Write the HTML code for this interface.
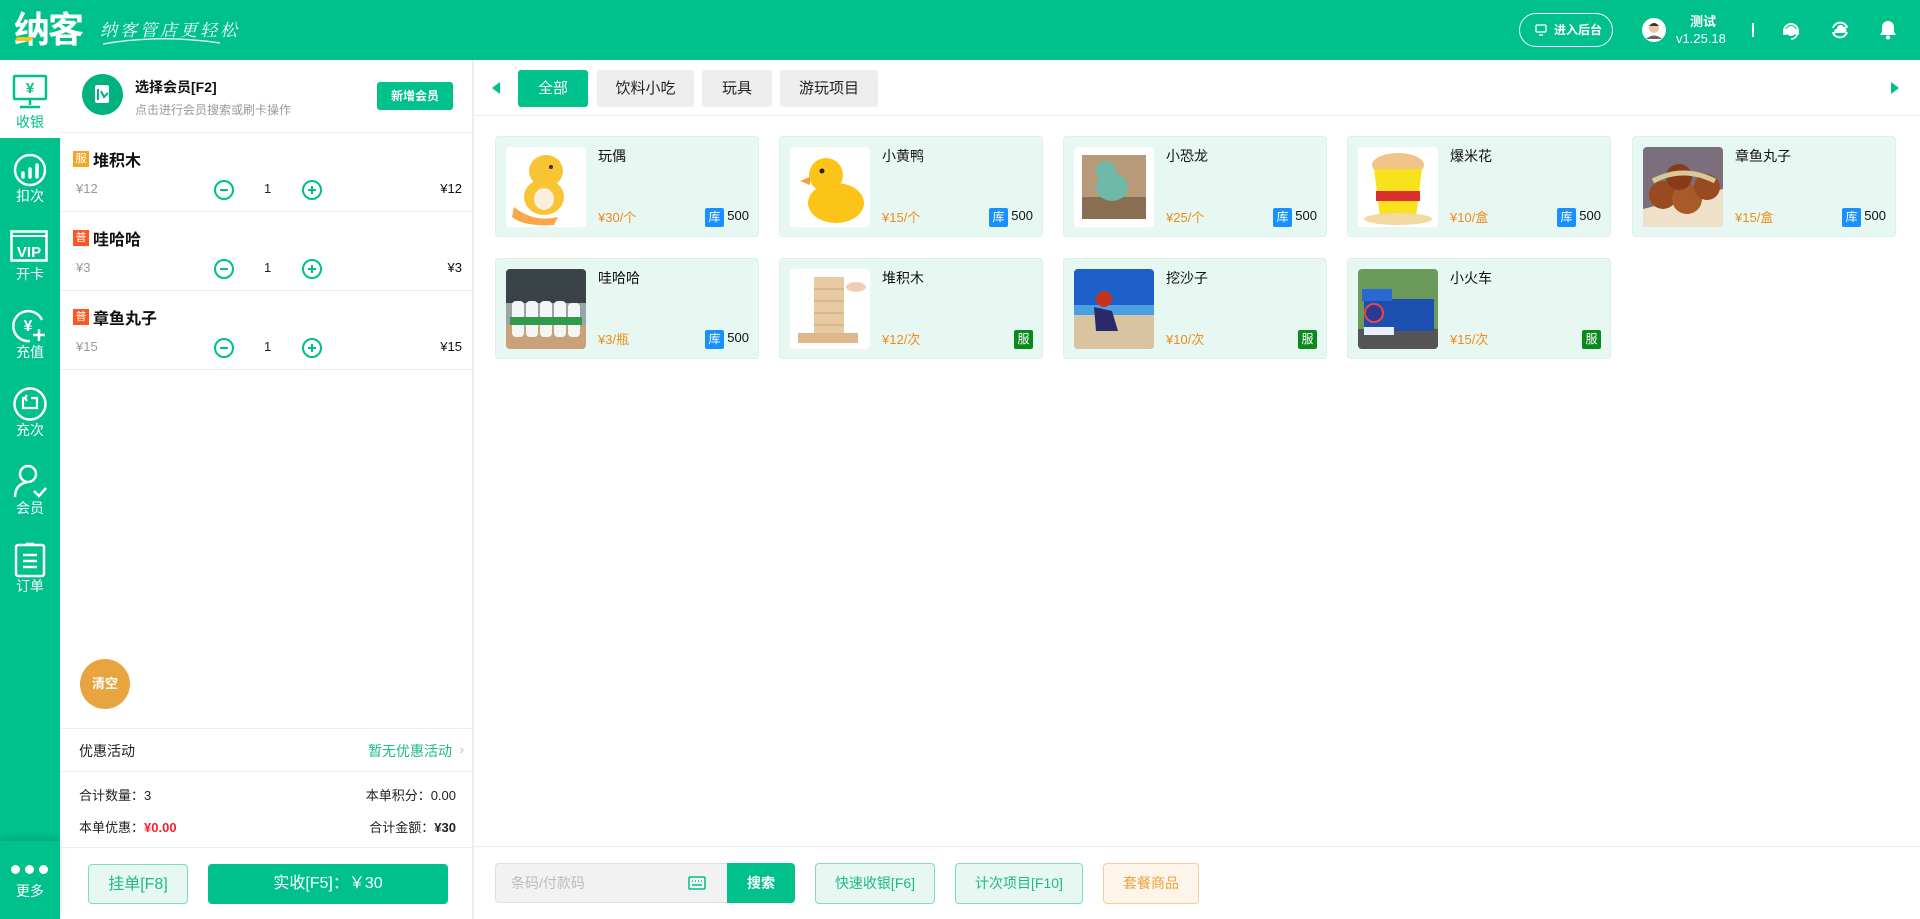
<!DOCTYPE html>
<html><head><meta charset="utf-8"><style>
*{margin:0;padding:0;box-sizing:border-box}
body{width:1920px;height:919px;overflow:hidden;background:#fff;font-family:"Liberation Sans","Noto Sans CJK SC",sans-serif;color:#222;position:relative}
.abs{position:absolute}
.hdr{left:0;top:0;width:1920px;height:60px;background:#00c08b}
.side{left:0;top:60px;width:60px;height:859px;background:#00c08b}
.si{position:absolute;left:0;width:60px;height:78px;color:#fff;font-size:14px;text-align:center}
.si svg{position:absolute;left:12px;top:14px}
.si span{position:absolute;left:0;right:0;top:48px}
.panel{left:60px;top:60px;width:414px;height:859px;border-right:2px solid #eee}
.item{position:absolute;left:0;width:412px;height:79px;border-bottom:1px solid #eee}
.tag{position:absolute;left:13px;top:18px;width:16px;height:16px;color:#fff;font-size:11px;line-height:16px;text-align:center}
.nm{position:absolute;left:33px;top:14px;font-size:16px;font-weight:bold;color:#111}
.pl{position:absolute;left:16px;top:48px;font-size:13px;color:#999}
.pr{position:absolute;right:10px;top:48px;font-size:13px;color:#111}
.qty{position:absolute;left:204px;top:48px;font-size:13px}
.cb{position:absolute;top:47px;width:20px;height:20px;border:2px solid #00c08b;border-radius:50%}
.cb:before{content:"";position:absolute;left:4px;top:7px;width:8px;height:2px;background:#00c08b}
.cb.p:after{content:"";position:absolute;left:7px;top:4px;width:2px;height:8px;background:#00c08b}
.tab{position:absolute;top:70px;height:37px;border-radius:3px;background:#eee;font-size:15px;line-height:37px;text-align:center;color:#222}
.card{position:absolute;width:264px;height:101px;background:#e6f8f1;border:1px solid #dcefe8;border-radius:4px}
.card .im{position:absolute;left:10px;top:10px;width:80px;height:80px;border-radius:4px;background:#fff;overflow:hidden}
.card .t{position:absolute;left:102px;top:9px;font-size:14px;color:#111}
.card .p{position:absolute;left:102px;top:70px;font-size:13px;color:#f08a1c}
.card .k{position:absolute;right:34px;top:71px;width:19px;height:19px;background:#1890ff;color:#fff;font-size:12px;line-height:19px;text-align:center;border-radius:2px}
.card .n{position:absolute;right:9px;top:71px;font-size:13px;color:#111}
.card .f{position:absolute;right:9px;top:71px;width:19px;height:19px;background:#0a8a1c;color:#fff;font-size:12px;line-height:19px;text-align:center;border-radius:2px}
.bb{position:absolute;top:863px;height:41px;border-radius:4px;font-size:14px;line-height:39px;text-align:center}
</style></head><body>
<div class="abs hdr"></div>
<div class="abs" style="left:14px;top:8px;font-size:36px;font-weight:bold;color:#fff;letter-spacing:-2px;line-height:44px">纳客</div>
<div class="abs" style="left:16px;top:37px;width:16px;height:4px;background:#f5c518;transform:skewX(-30deg)"></div>
<div class="abs" style="left:100px;top:16px;font-size:17px;color:#fff;font-style:italic;letter-spacing:3px;font-family:'Liberation Serif','Noto Serif CJK SC',serif">纳客管店更轻松</div>
<svg class="abs" style="left:100px;top:36px" width="125" height="10"><path d="M3 8 Q60 -2 120 7" stroke="#fff" stroke-width="1.5" fill="none" opacity=".8"/></svg>
<div class="abs" style="left:1519px;top:13px;width:94px;height:34px;border:1px solid #fff;border-radius:17px;color:#fff;font-size:12px;font-weight:bold;line-height:32px;padding-left:34px">进入后台</div>
<svg class="abs" style="left:1535px;top:24px" width="12" height="12"><rect x="1" y="1" width="10" height="7" rx="1" fill="none" stroke="#fff" stroke-width="1.3"/><path d="M4 11h4" stroke="#fff" stroke-width="1.3"/></svg>
<svg class="abs" style="left:1642px;top:18px" width="24" height="24"><circle cx="12" cy="12" r="12" fill="#fff"/><circle cx="12" cy="10" r="5" fill="#f2c4a0"/><path d="M7 8q5-6 10 0" fill="#333"/><path d="M4 21q8-7 16 0" fill="#666"/></svg>
<div class="abs" style="left:1686px;top:11px;width:34px;text-align:center;color:#fff;font-size:13px;font-weight:bold">测试</div>
<div class="abs" style="left:1676px;top:31px;color:#fff;font-size:13px">v1.25.18</div>
<div class="abs" style="left:1752px;top:23px;width:2px;height:14px;background:#fff"></div>
<svg class="abs" style="left:1781px;top:20px" width="20" height="20"><path d="M3 11a7 7 0 0 1 14 0" fill="none" stroke="#fff" stroke-width="2"/><rect x="2" y="9" width="4" height="6" rx="1.5" fill="#fff"/><rect x="14" y="9" width="4" height="6" rx="1.5" fill="#fff"/><circle cx="10" cy="11" r="5" fill="#fff"/><path d="M16 15q-2 4-6 4" stroke="#fff" fill="none" stroke-width="1.5"/></svg>
<svg class="abs" style="left:1830px;top:20px" width="20" height="20"><path d="M3 8a7.5 7.5 0 0 1 14-1M17 12a7.5 7.5 0 0 1-14 1" fill="none" stroke="#fff" stroke-width="2"/><path d="M15 4l2 3-3 1M5 16l-2-3 3-1" fill="none" stroke="#fff" stroke-width="1.5"/><path d="M6 13h8a2.5 2.5 0 0 0 0-5 3.5 3.5 0 0 0-7 1 2 2 0 0 0-1 4z" fill="#fff"/></svg>
<svg class="abs" style="left:1879px;top:19px" width="18" height="22"><path d="M9 2a6 6 0 0 0-6 6v5l-2 3h16l-2-3V8a6 6 0 0 0-6-6z" fill="#fff"/><circle cx="9" cy="18.5" r="2" fill="#fff"/></svg>

<div class="abs side"></div>
<div class="si" style="top:60px;background:#fff;color:#00c08b">
<svg width="36" height="36" viewBox="0 0 36 36" style="top:14px"><rect x="2" y="2" width="32" height="23" rx="1" fill="none" stroke="#00c08b" stroke-width="2.5"/><text x="18" y="19" font-size="15" font-weight="bold" fill="#00c08b" text-anchor="middle" font-family="Liberation Sans">¥</text><path d="M18 25v6M8 33h20" stroke="#00c08b" stroke-width="2.5"/></svg><span style="top:52px">收银</span></div>
<div class="si" style="top:138px"><svg width="36" height="36"><circle cx="18" cy="18" r="15" fill="none" stroke="#fff" stroke-width="2.5"/><path d="M11 25v-4M18 25v-8M25 25v-12" stroke="#fff" stroke-width="3.5" stroke-linecap="round"/></svg><span>扣次</span></div>
<div class="si" style="top:216px"><svg width="38" height="36" style="left:10px"><rect x="1.5" y="1.5" width="35" height="29" fill="none" stroke="#fff" stroke-width="2.5"/><path d="M1.5 6h35" stroke="#fff" stroke-width="2"/><text x="19" y="27" font-size="15" font-weight="bold" fill="#fff" text-anchor="middle" font-family="Liberation Sans">VIP</text></svg><span>开卡</span></div>
<div class="si" style="top:294px"><svg width="36" height="36"><path d="M30 12A15 15 0 1 0 18 33" fill="none" stroke="#fff" stroke-width="2.5"/><text x="16" y="23" font-size="16" font-weight="bold" fill="#fff" text-anchor="middle" font-family="Liberation Sans">¥</text><path d="M27 21v12M21 27h12" stroke="#fff" stroke-width="2.5"/></svg><span>充值</span></div>
<div class="si" style="top:372px"><svg width="36" height="36"><circle cx="18" cy="18" r="15.5" fill="none" stroke="#fff" stroke-width="2.5"/><path d="M13 12h-2v10h14V12h-6M15 9l-2 3 2 3" fill="none" stroke="#fff" stroke-width="2.2"/></svg><span>充次</span></div>
<div class="si" style="top:450px"><svg width="36" height="36"><circle cx="16" cy="10" r="8" fill="none" stroke="#fff" stroke-width="2.5"/><path d="M3 33q0-13 13-15M22 27l5 5 7-8" fill="none" stroke="#fff" stroke-width="2.5"/></svg><span>会员</span></div>
<div class="si" style="top:528px"><svg width="36" height="36"><rect x="4" y="3" width="28" height="31" rx="2" fill="none" stroke="#fff" stroke-width="2.5"/><path d="M14 2h8M11 13h14M11 19h14M11 25h14" stroke="#fff" stroke-width="2.5"/></svg><span>订单</span></div>
<div class="abs" style="left:0;top:841px;width:60px;height:78px;background:#00c08b;box-shadow:0 -3px 6px rgba(0,0,0,.12)"></div>
<div class="abs" style="left:11px;top:865px;width:9px;height:9px;border-radius:50%;background:#fff;box-shadow:14px 0 #fff,28px 0 #fff"></div>
<div class="abs" style="left:0;top:881px;width:60px;text-align:center;color:#fff;font-size:14px">更多</div>

<div class="abs panel">
 <div class="abs" style="left:22px;top:14px;width:41px;height:41px;border-radius:50%;background:#00b27f"></div>
 <svg class="abs" style="left:32px;top:23px" width="22" height="24"><rect x="3" y="2" width="14" height="18" rx="2" fill="#fff"/><path d="M6 6v11M9 8l3 6 4-4" stroke="#00b27f" stroke-width="2" fill="none"/></svg>
 <div class="abs" style="left:75px;top:17px;font-size:14px;font-weight:bold;color:#111">选择会员[F2]</div>
 <div class="abs" style="left:75px;top:41px;font-size:12px;color:#999">点击进行会员搜索或刷卡操作</div>
 <div class="abs" style="left:317px;top:22px;width:76px;height:28px;background:#00c08b;border-radius:3px;color:#fff;font-size:12px;font-weight:bold;text-align:center;line-height:28px">新增会员</div>
 <div class="abs" style="left:0;top:72px;width:412px;height:1px;background:#eee"></div>
 <div class="item" style="top:73px"><div class="tag" style="background:#f5a623">服</div><div class="nm">堆积木</div><div class="pl">¥12</div><div class="cb" style="left:154px"></div><div class="qty">1</div><div class="cb p" style="left:242px"></div><div class="pr">¥12</div></div>
 <div class="item" style="top:152px"><div class="tag" style="background:#ff5722">普</div><div class="nm">哇哈哈</div><div class="pl">¥3</div><div class="cb" style="left:154px"></div><div class="qty">1</div><div class="cb p" style="left:242px"></div><div class="pr">¥3</div></div>
 <div class="item" style="top:231px"><div class="tag" style="background:#ff5722">普</div><div class="nm">章鱼丸子</div><div class="pl">¥15</div><div class="cb" style="left:154px"></div><div class="qty">1</div><div class="cb p" style="left:242px"></div><div class="pr">¥15</div></div>
 <div class="abs" style="left:20px;top:599px;width:50px;height:50px;border-radius:50%;background:#e8a43e;color:#fff;font-size:13px;font-weight:bold;text-align:center;line-height:50px">清空</div>
 <div class="abs" style="left:0;top:668px;width:412px;height:1px;background:#eee"></div>
 <div class="abs" style="left:19px;top:681px;font-size:14px;color:#222">优惠活动</div>
 <div class="abs" style="right:20px;top:681px;font-size:14px;color:#1fb88a">暂无优惠活动</div>
 <div class="abs" style="right:8px;top:681px;font-size:14px;color:#bbb">›</div>
 <div class="abs" style="left:0;top:711px;width:412px;height:1px;background:#eee"></div>
 <div class="abs" style="left:19px;top:725px;font-size:13px">合计数量：3</div>
 <div class="abs" style="right:16px;top:725px;font-size:13px">本单积分：0.00</div>
 <div class="abs" style="left:19px;top:757px;font-size:13px">本单优惠：<b style="color:#f5222d">¥0.00</b></div>
 <div class="abs" style="right:16px;top:757px;font-size:13px">合计金额：<b>¥30</b></div>
 <div class="abs" style="left:0;top:787px;width:412px;height:1px;background:#eee"></div>
 <div class="bb" style="left:28px;top:804px;width:100px;height:40px;background:#e6f8f1;border:1px solid #7fdcbf;color:#1fb88a;font-size:16px">挂单[F8]</div>
 <div class="bb" style="left:148px;top:804px;width:240px;height:40px;background:#00c08b;color:#fff;font-size:16px;line-height:40px">实收[F5]：￥30</div>
</div>

<svg class="abs" style="left:491px;top:81px" width="10" height="14"><path d="M9 1v12L1 7z" fill="#00c08b"/></svg>
<svg class="abs" style="left:1890px;top:81px" width="10" height="14"><path d="M1 1v12l8-6z" fill="#00c08b"/></svg>
<div class="tab" style="left:518px;width:70px;background:#00c08b;color:#fff">全部</div>
<div class="tab" style="left:597px;width:97px">饮料小吃</div>
<div class="tab" style="left:702px;width:70px">玩具</div>
<div class="tab" style="left:780px;width:98px">游玩项目</div>
<div class="abs" style="left:474px;top:115px;width:1446px;height:1px;background:#eee"></div>

<div class="card" style="left:495px;top:136px"><div class="im"><svg width="80" height="80"><ellipse cx="40" cy="24" rx="17" ry="16" fill="#f7c434"/><ellipse cx="38" cy="50" rx="20" ry="18" fill="#f7c434"/><ellipse cx="38" cy="52" rx="10" ry="11" fill="#fbeedc"/><path d="M8 60q20 16 44 10l-4 8q-30 2-42-8z" fill="#f8a84a"/><circle cx="45" cy="20" r="2" fill="#333"/></svg></div><div class="t">玩偶</div><div class="p">¥30/个</div><div class="k">库</div><div class="n">500</div></div>
<div class="card" style="left:779px;top:136px"><div class="im"><svg width="80" height="80"><ellipse cx="46" cy="56" rx="28" ry="20" fill="#fcc419"/><circle cx="36" cy="28" r="17" fill="#fcc419"/><path d="M20 30l-10 4 10 4z" fill="#f59f3a"/><circle cx="32" cy="24" r="2.5" fill="#222"/></svg></div><div class="t">小黄鸭</div><div class="p">¥15/个</div><div class="k">库</div><div class="n">500</div></div>
<div class="card" style="left:1063px;top:136px"><div class="im"><svg width="80" height="80"><rect x="8" y="8" width="64" height="64" fill="#b69a7a"/><rect x="8" y="50" width="64" height="22" fill="#8a6e54"/><ellipse cx="38" cy="40" rx="16" ry="14" fill="#6fb9a8"/><circle cx="32" cy="24" r="10" fill="#6fb9a8"/></svg></div><div class="t">小恐龙</div><div class="p">¥25/个</div><div class="k">库</div><div class="n">500</div></div>
<div class="card" style="left:1347px;top:136px"><div class="im"><svg width="80" height="80"><ellipse cx="40" cy="18" rx="26" ry="12" fill="#f2c48a"/><path d="M16 22h48l-6 48H22z" fill="#f7e21b"/><rect x="18" y="44" width="44" height="10" fill="#d93030"/><ellipse cx="40" cy="72" rx="34" ry="6" fill="#f2d9a2"/></svg></div><div class="t">爆米花</div><div class="p">¥10/盒</div><div class="k">库</div><div class="n">500</div></div>
<div class="card" style="left:1632px;top:136px"><div class="im" style="background:#7b6f7c"><svg width="80" height="80"><path d="M0 62l80-20v38H0z" fill="#efe1c9"/><circle cx="20" cy="48" r="14" fill="#9a4a20"/><circle cx="44" cy="52" r="15" fill="#a85a28"/><circle cx="64" cy="40" r="13" fill="#9a4a20"/><circle cx="36" cy="30" r="13" fill="#8a3a18"/><path d="M10 34q30-16 62 0" stroke="#d9c89a" stroke-width="5" fill="none"/></svg></div><div class="t">章鱼丸子</div><div class="p">¥15/盒</div><div class="k">库</div><div class="n">500</div></div>

<div class="card" style="left:495px;top:258px"><div class="im" style="background:#9aa5a8"><svg width="80" height="80"><rect width="80" height="34" fill="#3a4448"/><rect y="56" width="80" height="24" fill="#c9a27a"/><g fill="#f4f6f4"><rect x="6" y="32" width="12" height="36" rx="4"/><rect x="20" y="32" width="12" height="36" rx="4"/><rect x="34" y="32" width="12" height="36" rx="4"/><rect x="48" y="32" width="12" height="36" rx="4"/><rect x="62" y="34" width="12" height="34" rx="4"/></g><rect x="4" y="48" width="72" height="8" fill="#2e9a4a"/></svg></div><div class="t">哇哈哈</div><div class="p">¥3/瓶</div><div class="k">库</div><div class="n">500</div></div>
<div class="card" style="left:779px;top:258px"><div class="im"><svg width="80" height="80"><rect x="24" y="8" width="30" height="58" fill="#e8caa2"/><path d="M24 20h30M24 32h30M24 44h30M24 56h30" stroke="#c8a47c"/><rect x="8" y="64" width="60" height="10" fill="#deb88c"/><ellipse cx="66" cy="18" rx="10" ry="5" fill="#f2cdb6"/></svg></div><div class="t">堆积木</div><div class="p">¥12/次</div><div class="f">服</div></div>
<div class="card" style="left:1063px;top:258px"><div class="im" style="background:#1d5fc8"><svg width="80" height="80"><rect y="44" width="80" height="36" fill="#d8c4a0"/><rect y="36" width="80" height="10" fill="#4aa0e0"/><circle cx="30" cy="30" r="8" fill="#c83020"/><path d="M20 38l18 4 6 20H22z" fill="#2a2a6a"/></svg></div><div class="t">挖沙子</div><div class="p">¥10/次</div><div class="f">服</div></div>
<div class="card" style="left:1347px;top:258px"><div class="im" style="background:#6b9a5a"><svg width="80" height="80"><rect y="60" width="80" height="20" fill="#555"/><rect x="6" y="30" width="70" height="32" fill="#1d4fb0"/><rect x="4" y="20" width="30" height="12" fill="#2a6ad0"/><circle cx="16" cy="44" r="9" fill="#2a3a90" stroke="#e44" stroke-width="2"/><rect x="6" y="58" width="30" height="8" fill="#e8f0ff"/></svg></div><div class="t">小火车</div><div class="p">¥15/次</div><div class="f">服</div></div>

<div class="abs" style="left:474px;top:846px;width:1446px;height:1px;background:#eee"></div>
<div class="abs" style="left:495px;top:863px;width:233px;height:40px;background:#f2f2f2;border:1px solid #e0e0e0;border-radius:4px 0 0 4px;font-size:14px;color:#bbb;line-height:38px;padding-left:15px">条码/付款码</div>
<svg class="abs" style="left:688px;top:876px" width="18" height="14"><rect x="1" y="1" width="16" height="12" rx="1" fill="none" stroke="#00c08b" stroke-width="1.5"/><path d="M4 5h1M7 5h1M10 5h1M13 5h1M4 9h10" stroke="#00c08b" stroke-width="1.5"/></svg>
<div class="bb" style="left:727px;width:68px;height:40px;background:#00c08b;color:#fff;font-weight:bold;border-radius:0 4px 4px 0;line-height:40px">搜索</div>
<div class="bb" style="left:815px;width:120px;background:#e6f8f1;border:1px solid #7fdcbf;color:#1fb88a">快速收银[F6]</div>
<div class="bb" style="left:955px;width:128px;background:#e6f8f1;border:1px solid #7fdcbf;color:#1fb88a">计次项目[F10]</div>
<div class="bb" style="left:1103px;width:96px;background:#fdf4ea;border:1px solid #f6cf98;color:#e8a43e">套餐商品</div>
</body></html>
